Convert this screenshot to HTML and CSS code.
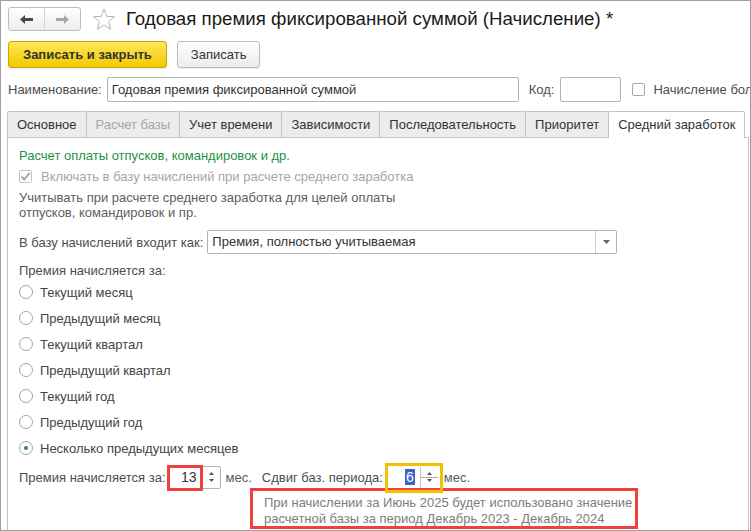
FILE: index.html
```html
<!DOCTYPE html>
<html lang="ru">
<head>
  <meta charset="UTF-8">
  <title>Годовая премия фиксированной суммой (Начисление)</title>
  <link rel="stylesheet" href="styles.css">
</head>
<body>

  <div class="window">
    <div class="header">
      <div class="nav">
        <span>
          <svg width="13" height="9" viewBox="0 0 13 9"><path d="M0 4.5 L5 0 V3 H13 V6 H5 V9 Z" fill="#4a4a4a"/></svg>
        </span>
        <span>
          <svg width="13" height="9" viewBox="0 0 13 9"><path d="M13 4.5 L8 0 V3 H0 V6 H8 V9 Z" fill="#a8a8a8"/></svg>
        </span>
      </div>
      <svg class="star" width="24" height="23" viewBox="0 0 24 23">
        <path d="M12 1 L14.8 8.4 L22.6 8.7 L16.5 13.6 L18.6 21.2 L12 16.9 L5.4 21.2 L7.5 13.6 L1.4 8.7 L9.2 8.4 Z" fill="none" stroke="#b4b4b4" stroke-width="1" stroke-linejoin="round"/>
      </svg>
      <h1 class="title">Годовая премия фиксированной суммой (Начисление) *</h1>
    </div>

    <div class="toolbar">
      <button class="btn btn-main">Записать и закрыть</button>
      <button class="btn">Записать</button>
    </div>

    <div class="name-row">
      <label>Наименование:</label>
      <div class="field name-field">Годовая премия фиксированной суммой</div>
      <label class="code-label">Код:</label>
      <div class="field code-field"></div>
      <span class="checkbox"></span>
      <label>Начисление больше не используется</label>
    </div>

    <div class="tabs">
      <div class="tab">Основное</div>
      <div class="tab disabled">Расчет базы</div>
      <div class="tab">Учет времени</div>
      <div class="tab">Зависимости</div>
      <div class="tab">Последовательность</div>
      <div class="tab">Приоритет</div>
      <div class="tab active">Средний заработок</div>
    </div>

    <div class="panel">
      <div class="group-title">Расчет оплаты отпусков, командировок и др.</div>

      <div class="check-row">
        <span class="checkbox checked">
          <svg width="11" height="11" viewBox="0 0 11 11"><path d="M1.5 5.5 L4.3 8.5 L9.8 1.8" fill="none" stroke="#a9a9a9" stroke-width="2"/></svg>
        </span>
        <span class="muted">Включать в базу начислений при расчете среднего заработка</span>
      </div>

      <div class="hint">Учитывать при расчете среднего заработка для целей оплаты<br>отпусков, командировок и пр.</div>

      <div class="select-row">
        <label>В базу начислений входит как:</label>
        <div class="field select">
          <span>Премия, полностью учитываемая</span>
          <span class="drop">
            <svg width="7" height="4" viewBox="0 0 7 4"><path d="M0 0 H7 L3.5 4 Z" fill="#666"/></svg>
          </span>
        </div>
      </div>

      <div class="radio-caption">Премия начисляется за:</div>
      <div class="radios">
        <div class="radio-row"><span class="radio"></span>Текущий месяц</div>
        <div class="radio-row"><span class="radio"></span>Предыдущий месяц</div>
        <div class="radio-row"><span class="radio"></span>Текущий квартал</div>
        <div class="radio-row"><span class="radio"></span>Предыдущий квартал</div>
        <div class="radio-row"><span class="radio"></span>Текущий год</div>
        <div class="radio-row"><span class="radio"></span>Предыдущий год</div>
        <div class="radio-row"><span class="radio selected"></span>Несколько предыдущих месяцев</div>
      </div>

      <div class="period-row">
        <label>Премия начисляется за:</label>
        <div class="spin">
          <span class="spin-value">13</span>
          <span class="spin-buttons">
            <svg width="5" height="3" viewBox="0 0 5 3"><path d="M0 3 L2.5 0 L5 3 Z" fill="#555"/></svg>
            <svg width="5" height="3" viewBox="0 0 5 3"><path d="M0 0 L5 0 L2.5 3 Z" fill="#555"/></svg>
          </span>
          <span class="mark mark-red"></span>
        </div>
        <span class="unit">мес.</span>
        <label class="shift-label">Сдвиг баз. периода:</label>
        <div class="spin spin-shift">
          <span class="spin-value"><span class="selected-text">6</span></span>
          <span class="spin-buttons">
            <svg width="5" height="3" viewBox="0 0 5 3"><path d="M0 3 L2.5 0 L5 3 Z" fill="#555"/></svg>
            <svg width="5" height="3" viewBox="0 0 5 3"><path d="M0 0 L5 0 L2.5 3 Z" fill="#555"/></svg>
          </span>
          <span class="mark mark-yellow"></span>
        </div>
        <span class="unit">мес.</span>
      </div>

      <div class="note">
        При начислении за Июнь 2025 будет использовано значение<br>
        расчетной базы за период Декабрь 2023 - Декабрь 2024
      </div>
    </div>
  </div>

</body>
</html>
```

FILE: styles.css
```css
* {
  box-sizing: border-box;
}

body {
  margin: 0;
  background: #fff;
  font-family: "Liberation Sans", Arial, sans-serif;
  font-size: 13px;
  color: #4d4d4d;
}

.window {
  width: 751px;
  height: 531px;
  border: 1px solid #a0a0a0;
  overflow: hidden;
}

/* header */

.header {
  display: flex;
  align-items: center;
  height: 24px;
  margin: 6px 0 0 7px;
}

.nav {
  display: flex;
  width: 73px;
  height: 24px;
  border: 1px solid #bdbdbd;
  border-radius: 3px;
  background: linear-gradient(#fff, #ededed);
}

.nav span {
  flex: 1;
  display: flex;
  align-items: center;
  justify-content: center;
}

.nav span + span {
  border-left: 1px solid #d4d4d4;
}

.star {
  margin-left: 11px;
}

.title {
  margin: 0 0 0 10px;
  font-size: 18.7px;
  font-weight: normal;
  color: #1a1a1a;
  white-space: nowrap;
}

/* toolbar */

.toolbar {
  display: flex;
  gap: 10px;
  margin: 10px 0 0 7px;
}

.btn {
  height: 27px;
  padding: 0 13px;
  border: 1px solid #bcbcbc;
  border-radius: 3px;
  background: linear-gradient(#fff, #ececec);
  font: inherit;
  color: #333;
  box-shadow: 0 1px 1px rgba(0, 0, 0, 0.08);
}

.btn-main {
  padding: 0 14px;
  background: linear-gradient(#fee758, #f2c900);
  border-color: #c9a700;
  font-weight: bold;
  color: #333;
}

/* fields */

.field {
  flex: none;
  height: 25px;
  border: 1px solid #b4b4b4;
  border-radius: 2px;
  background: #fff;
  color: #333;
  line-height: 23px;
  padding: 0 4px;
  white-space: nowrap;
}

label {
  flex: none;
  white-space: nowrap;
}

.name-row {
  display: flex;
  align-items: center;
  margin: 9px 0 0 7px;
  white-space: nowrap;
}

.name-field {
  width: 412px;
  margin-left: 5px;
}

.code-label {
  margin-left: 10px;
}

.code-field {
  width: 61px;
  margin-left: 6px;
}

.checkbox {
  display: inline-flex;
  align-items: center;
  justify-content: center;
  flex: none;
  width: 13px;
  height: 13px;
  border: 1px solid #a9a9a9;
  border-radius: 2px;
  background: #fff;
}

.name-row .checkbox {
  margin: 0 8px 0 11px;
}

/* tabs */

.tabs {
  display: flex;
  align-items: flex-end;
  margin: 9px 0 0 6px;
  height: 26px;
}

.tab {
  flex: none;
  height: 26px;
  padding: 0 9px;
  line-height: 25px;
  border: 1px solid #c3c3c3;
  border-bottom: none;
  border-radius: 2px 2px 0 0;
  margin-right: -1px;
  background: #ececec;
  color: #333;
  white-space: nowrap;
}

.tab.disabled {
  color: #a6a6a6;
}

.tab.active {
  background: #fff;
  height: 27px;
  margin-bottom: -1px;
  position: relative;
  z-index: 1;
}

.panel {
  width: 742px;
  height: 420px;
  margin-left: 6px;
  border: 1px solid #c3c3c3;
  padding: 10px 0 0 11px;
}

.group-title {
  line-height: 16px;
  color: #1f9244;
}

.check-row {
  display: flex;
  align-items: center;
  gap: 9px;
  height: 16px;
  margin-top: 4px;
}

.checkbox.checked {
  border-color: #c4c4c4;
}

.muted {
  color: #a6a6a6;
}

.hint {
  margin-top: 6px;
  line-height: 15px;
  color: #5e5e5e;
}

.select-row {
  display: flex;
  align-items: center;
  margin-top: 10px;
}

.select {
  display: flex;
  justify-content: space-between;
  width: 410px;
  height: 24px;
  line-height: 22px;
  margin-left: 4px;
  padding-right: 0;
}

.drop {
  display: flex;
  align-items: center;
  justify-content: center;
  width: 21px;
  border-left: 1px solid #d0d0d0;
}

.radio-caption {
  margin-top: 9px;
  line-height: 16px;
}

.radio-row {
  display: flex;
  align-items: center;
  gap: 7px;
  height: 26px;
  color: #444;
}

.radio {
  display: inline-flex;
  align-items: center;
  justify-content: center;
  width: 14px;
  height: 14px;
  border: 1px solid #a4a4a4;
  border-radius: 50%;
}

.radio.selected::after {
  content: "";
  width: 4px;
  height: 4px;
  border-radius: 50%;
  background: #1f9a45;
}

/* period row */

.period-row {
  display: flex;
  align-items: center;
  height: 24px;
  margin-top: 4px;
}

.spin {
  display: flex;
  flex: none;
  width: 53px;
  height: 23px;
  margin-left: 2px;
  border: 1px solid #b4b4b4;
  border-radius: 2px;
  position: relative;
  color: #333;
}

.spin-value {
  flex: 1;
  text-align: right;
  padding-right: 5px;
  line-height: 21px;
  font-size: 14px;
}

.spin-buttons {
  display: flex;
  flex-direction: column;
  align-items: center;
  justify-content: space-around;
  width: 18px;
  border-left: 1px solid #c4c4c4;
  padding: 3px 0;
}

.mark {
  position: absolute;
  border: 3px solid;
  pointer-events: none;
}

.mark-red {
  border-color: #f2403f;
  left: -2px;
  top: -2px;
  width: 36px;
  height: 26px;
}

.unit {
  margin-left: 5px;
  color: #5a5a5a;
}

.shift-label {
  margin-left: 10px;
}

.spin-shift {
  width: 53px;
  margin-left: 3px;
  border-color: transparent;
}

.spin-shift .spin-buttons {
  background: linear-gradient(transparent 10px, #a8a8a8 10px, #a8a8a8 11px, transparent 11px);
}

.selected-text {
  background: #3d63c9;
  color: #fff;
  padding: 0 1px;
}

.mark-yellow {
  border-color: #f2c200;
  left: -2px;
  top: -4px;
  width: 58px;
  height: 30px;
}

.note {
  width: 388px;
  margin: -1px 0 0 231px;
  padding: 4px 0 0 11px;
  height: 41px;
  border: 3px solid #f2403f;
  line-height: 16px;
  color: #7d7d7d;
}
```
